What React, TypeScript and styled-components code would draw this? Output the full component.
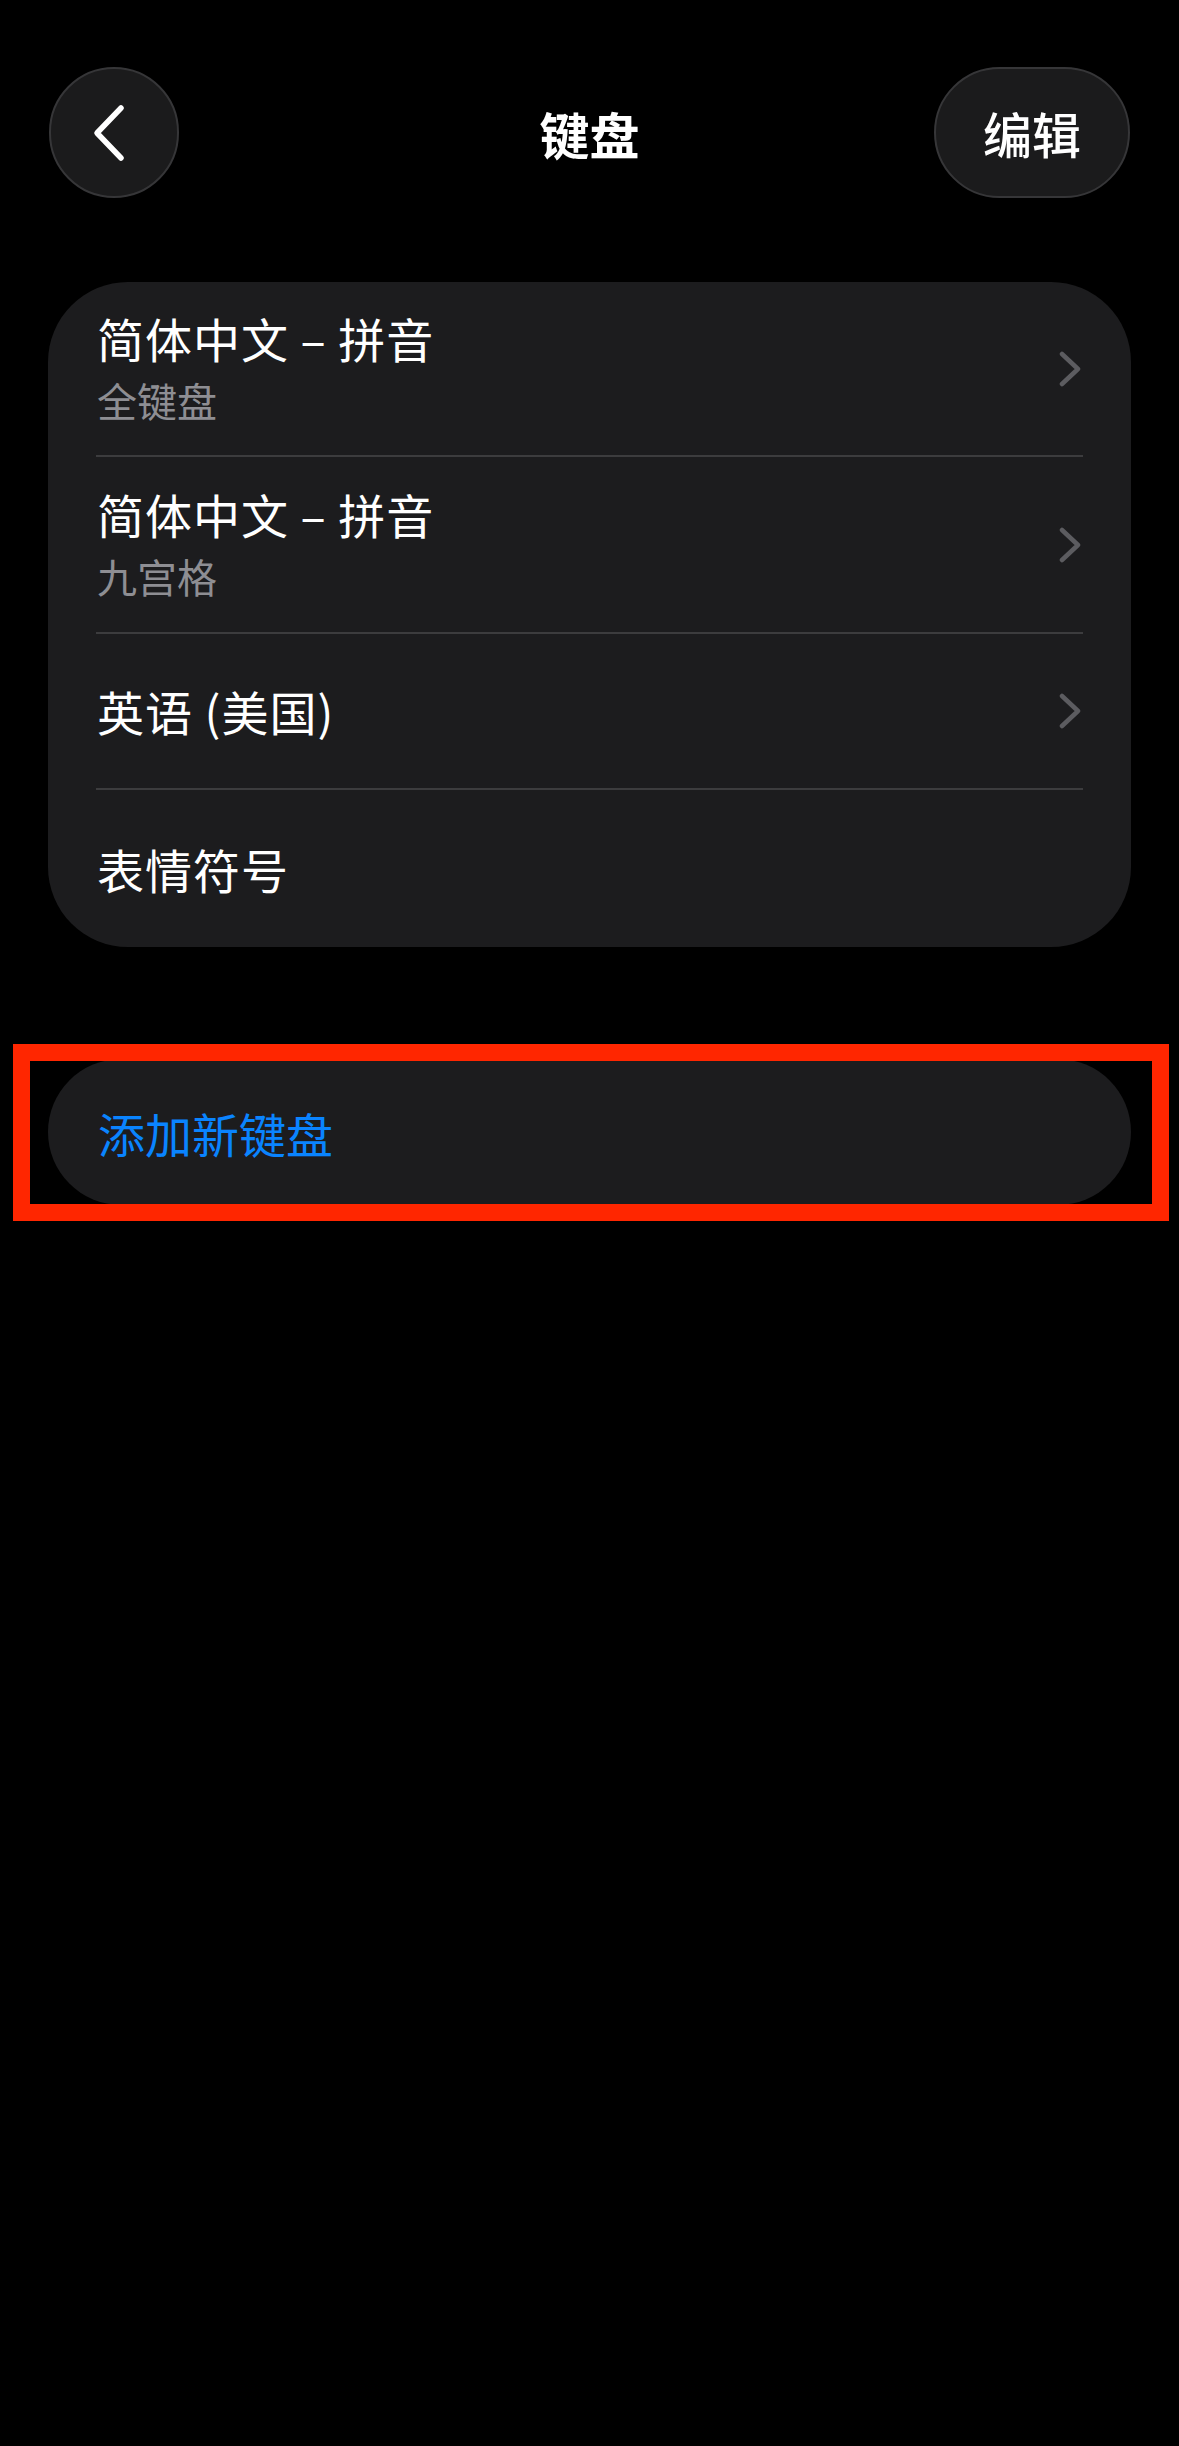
import React from "react";
import styled, { createGlobalStyle } from "styled-components";

const GlobalStyle = createGlobalStyle`
  html, body {
    margin: 0;
    padding: 0;
    background: #000;
  }
  body {
    font-family: "Noto Sans CJK SC", "Noto Sans", "Liberation Sans", sans-serif;
    color: #fff;
    -webkit-font-smoothing: antialiased;
  }
`;

const Page = styled.div`
  width: 1179px;
  min-height: 2446px;
  background: #000;
  display: flex;
  flex-direction: column;
  padding: 67px 48px 0 48px;
  box-sizing: border-box;
`;

const Header = styled.header`
  height: 131px;
  display: flex;
  align-items: center;
  justify-content: space-between;
  position: relative;
  padding-left: 1px;
  padding-right: 1px;
`;

const GlassButton = styled.button<{ $width: number }>`
  width: ${(p) => p.$width}px;
  height: 131px;
  border-radius: 66px;
  background: #1b1b1c;
  border: 2px solid #363638;
  box-sizing: border-box;
  display: flex;
  align-items: center;
  justify-content: center;
  padding: 0;
  color: #fff;
  font-family: inherit;
  cursor: pointer;
`;

const BackIcon = styled.svg`
  width: 36px;
  height: 60px;
  margin-right: 10px;
`;

const EditLabel = styled.span`
  font-size: 49px;
  font-weight: 500;
  line-height: 1;
  letter-spacing: 0;
`;

const Title = styled.h1`
  position: absolute;
  left: 50%;
  top: 50%;
  transform: translate(-50%, -50%);
  margin: 0;
  font-size: 50px;
  font-weight: 700;
  line-height: 1;
  color: #fff;
`;

const Card = styled.section`
  margin-top: 84px;
  background: #1c1c1e;
  border-radius: 80px;
  display: flex;
  flex-direction: column;
  overflow: hidden;
`;

const Row = styled.div<{ $height: number }>`
  height: ${(p) => p.$height}px;
  display: flex;
  align-items: center;
  justify-content: space-between;
  padding: 0 50px 0 49px;
  box-sizing: border-box;
`;

const RowText = styled.div`
  display: flex;
  flex-direction: column;
  justify-content: center;
`;

const RowTitle = styled.span`
  font-size: 47px;
  line-height: 62px;
  color: #fff;
  font-weight: 400;
  letter-spacing: 1px;
  white-space: pre;
`;

const RowSubtitle = styled.span`
  font-size: 40px;
  line-height: 62px;
  color: #8e8e93;
  font-weight: 400;
`;

const Separator = styled.div`
  height: 2px;
  background: #3c3c3e;
  margin: 0 48px;
`;

const Chevron = styled.svg`
  width: 22px;
  height: 36px;
  flex-shrink: 0;
`;

const AddWrap = styled.div`
  margin-top: 112px;
  position: relative;
`;

const AddPill = styled.div`
  height: 146px;
  border-radius: 73px;
  background: #1c1c1e;
  display: flex;
  align-items: center;
  padding-left: 50px;
`;

const AddLabel = styled.span`
  font-size: 47px;
  color: #0a84ff;
  line-height: 1;
`;

const Highlight = styled.div`
  position: absolute;
  left: -35px;
  right: -38px;
  top: -15px;
  bottom: -16px;
  border: 17px solid #ff2600;
  pointer-events: none;
`;

const RowChevron = () => (
  <Chevron viewBox="0 0 22 36" fill="none">
    <polyline
      points="3,3 19,18 3,33"
      stroke="#5c5c60"
      strokeWidth="4.5"
      strokeLinecap="round"
      strokeLinejoin="round"
    />
  </Chevron>
);

type Item = { title: string; subtitle?: string; chevron: boolean; height: number };

const items: Item[] = [
  { title: "简体中文 – 拼音", subtitle: "全键盘", chevron: true, height: 173 },
  { title: "简体中文 – 拼音", subtitle: "九宫格", chevron: true, height: 175 },
  { title: "英语 (美国)", chevron: true, height: 154 },
  { title: "表情符号", chevron: false, height: 157 },
];

export default function App() {
  return (
    <>
      <GlobalStyle />
      <Page>
        <Header>
          <GlassButton $width={130} aria-label="返回">
            <BackIcon viewBox="0 0 36 60" fill="none">
              <polyline
                points="30,5 6,30 30,55"
                stroke="#fff"
                strokeWidth="5.5"
                strokeLinecap="round"
                strokeLinejoin="round"
              />
            </BackIcon>
          </GlassButton>
          <Title>键盘</Title>
          <GlassButton $width={196}>
            <EditLabel>编辑</EditLabel>
          </GlassButton>
        </Header>

        <Card>
          {items.map((it, i) => (
            <React.Fragment key={i}>
              {i > 0 && <Separator />}
              <Row $height={it.height}>
                <RowText>
                  <RowTitle>{it.title}</RowTitle>
                  {it.subtitle && <RowSubtitle>{it.subtitle}</RowSubtitle>}
                </RowText>
                {it.chevron && <RowChevron />}
              </Row>
            </React.Fragment>
          ))}
        </Card>

        <AddWrap>
          <AddPill>
            <AddLabel>添加新键盘</AddLabel>
          </AddPill>
          <Highlight />
        </AddWrap>
      </Page>
    </>
  );
}
